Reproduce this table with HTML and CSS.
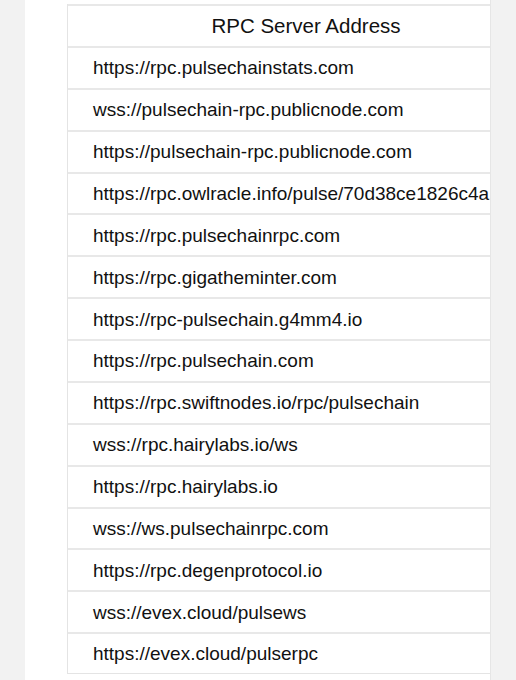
FILE: index.html
```html
<!DOCTYPE html>
<html>
<head>
<meta charset="utf-8">
<link rel="stylesheet" href="styles.css">
</head>
<body>
<div class="card">
  <div class="table">
    <div class="row head">RPC Server Address</div>
    <div class="row">https://rpc.pulsechainstats.com</div>
    <div class="row">wss://pulsechain-rpc.publicnode.com</div>
    <div class="row">https://pulsechain-rpc.publicnode.com</div>
    <div class="row">https://rpc.owlracle.info/pulse/70d38ce1826c4a</div>
    <div class="row">https://rpc.pulsechainrpc.com</div>
    <div class="row">https://rpc.gigatheminter.com</div>
    <div class="row">https://rpc-pulsechain.g4mm4.io</div>
    <div class="row">https://rpc.pulsechain.com</div>
    <div class="row">https://rpc.swiftnodes.io/rpc/pulsechain</div>
    <div class="row">wss://rpc.hairylabs.io/ws</div>
    <div class="row">https://rpc.hairylabs.io</div>
    <div class="row">wss://ws.pulsechainrpc.com</div>
    <div class="row">https://rpc.degenprotocol.io</div>
    <div class="row">wss://evex.cloud/pulsews</div>
    <div class="row last">https://evex.cloud/pulserpc</div>
  </div>
</div>
</body>
</html>
```
FILE: styles.css
```css
html, body {
  margin: 0;
  padding: 0;
  background: #f2f2f2;
  height: 680px;
  overflow: hidden;
}
.card {
  margin-left: 25px;
  width: 466px;
  height: 680px;
  box-sizing: border-box;
  background: #ffffff;
  border-right: 1px solid #e6e6e6;
  overflow: hidden;
  padding-top: 4px;
  padding-left: 42px;
}
.table {
  width: 476px;
  border-left: 1px solid #e4e4e4;
  border-right: 1px solid #e4e4e4;
  font-family: "Liberation Sans", Arial, sans-serif;
  color: #111111;
}
.row {
  height: 41.875px;
  box-sizing: border-box;
  border-top: 2px solid #e8e8e8;
  display: flex;
  align-items: center;
  padding-left: 25px;
  padding-top: 1px;
  font-size: 19px;
  white-space: nowrap;
  overflow: hidden;
}
.row.last {
  border-bottom: 1px solid #e4e4e4;
}
.head {
  justify-content: center;
  padding-left: 0;
  font-size: 20.5px;
}
```
